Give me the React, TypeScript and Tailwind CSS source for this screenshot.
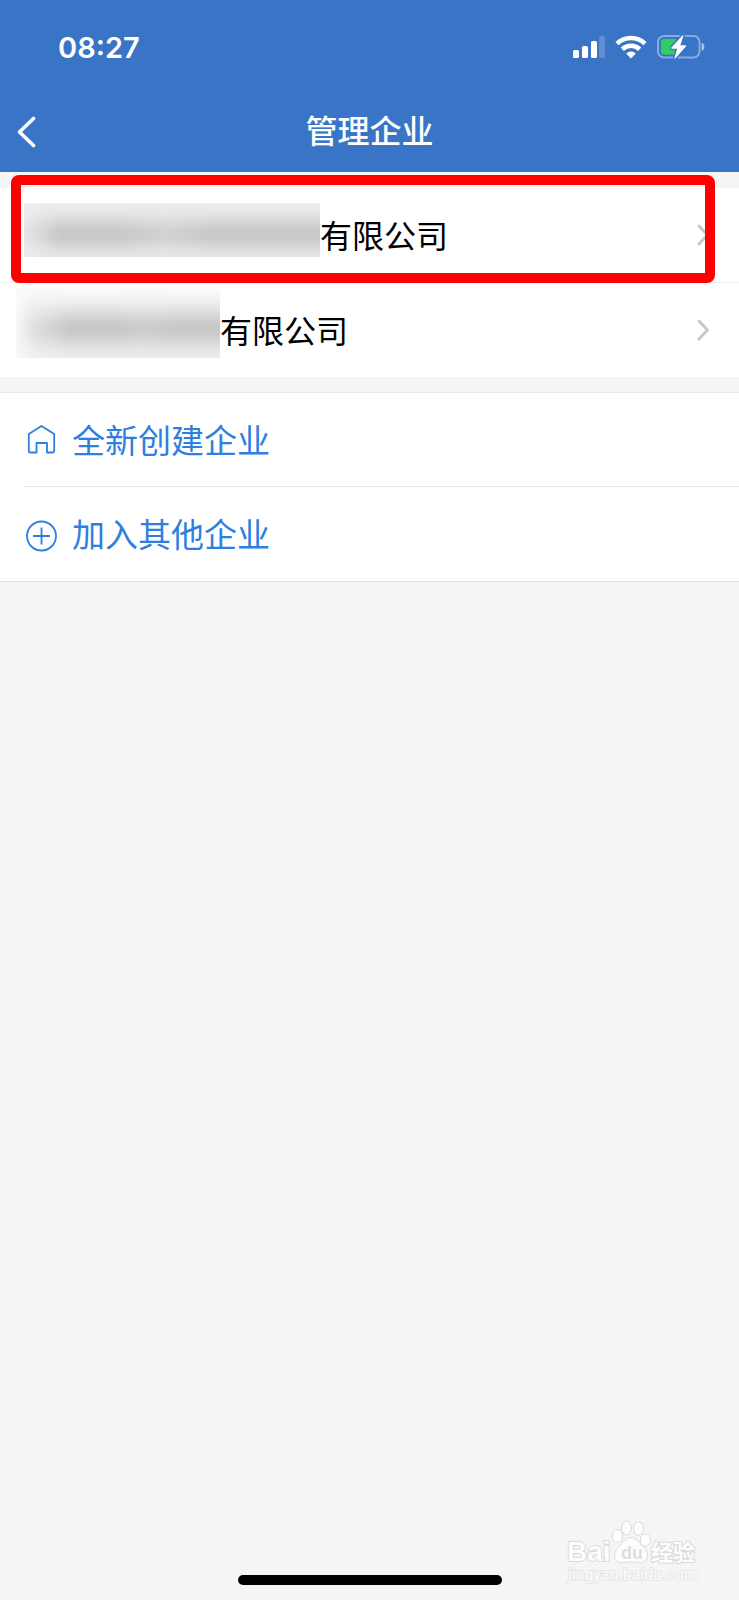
import type { ReactNode } from "react";

interface Company {
  id: string;
  suffix: string;
  maskClass: string;
  rowClass: string;
}

const companies: Company[] = [
  {
    id: "first",
    suffix: "有限公司",
    rowClass: "pl-6",
    maskClass:
      "w-[296px] h-[54px] -mt-2.5 bg-[linear-gradient(to_right,#eeeeeecc,#eeeeee00_12%,#eeeeee00_32%,#eeeeee40_48%,#eeeeee00_64%),linear-gradient(to_bottom,#eeeff0,#e2e2e2_22%,#c9c9c9_50%,#c9c9c9_65%,#e0e0e0_90%,#e4e4e4)]",
  },
  {
    id: "second",
    suffix: "有限公司",
    rowClass: "pl-4",
    maskClass:
      "w-[204px] h-[70px] -mt-3.5 bg-[linear-gradient(to_right,#fafafaf0,#f6f6f680_9%,#f0f0f000_26%,#f0f0f000_50%,#f0f0f020_62%,#f0f0f000_78%),linear-gradient(to_bottom,#fcfcfc,#efefef_20%,#c9c9c9_52%,#c9c9c9_64%,#e6e6e6_90%,#ebebeb)]",
  },
];

const ChevronRight = () => (
  <svg className="ml-auto h-[22px] w-3.5 shrink-0" viewBox="0 0 14 22" fill="none" aria-hidden="true">
    <path d="M2 2 10.5 11 2 20" stroke="#c8c8c8" strokeWidth="3" strokeLinecap="round" strokeLinejoin="round" />
  </svg>
);

const StatusBar = () => (
  <div className="flex h-[94px] items-center justify-between pr-[34px] pl-[58px]">
    <time className="pt-0.5 font-['Inter',sans-serif] text-[29px] leading-9 font-semibold">08:27</time>
    <div className="flex items-center gap-2.5">
      <svg className="h-6 w-8" viewBox="0 0 32 24" fill="#fff" aria-hidden="true">
        <rect x="0" y="15" width="6" height="8" rx="1.6" />
        <rect x="9" y="11" width="6" height="12" rx="1.6" />
        <rect x="18" y="6" width="6" height="17" rx="1.6" />
        <rect x="26" y="1" width="6" height="22" rx="1.6" opacity=".2" />
      </svg>
      <svg className="h-6 w-8" viewBox="0 0 32 24" aria-hidden="true">
        <g fill="none" stroke="#fff" strokeWidth="4.6">
          <path d="M2 8.6a20.5 20.5 0 0 1 28 0" />
          <path d="M7.3 14.2a12.8 12.8 0 0 1 17.4 0" />
        </g>
        <path d="M11.2 18.4a7 7 0 0 1 9.6 0L16 23.4Z" fill="#fff" />
      </svg>
      <svg className="h-6 w-12" viewBox="0 0 48 24" aria-hidden="true">
        <rect x="1" y="1" width="41.5" height="21.5" rx="6" fill="none" stroke="#fff" strokeOpacity=".4" strokeWidth="2" />
        <path d="M45 8.2c2.6.9 2.6 6.3 0 7.2Z" fill="#fff" fillOpacity=".5" stroke="#fff" strokeOpacity=".4" />
        <path d="M7.5 4H19v15.5H7.5A3.5 3.5 0 0 1 4 16V7.5A3.5 3.5 0 0 1 7.5 4Z" fill="#30d158" />
        <path
          d="M25.4.6 14.4 12.4c-.6.7-.3 1.3.5 1.3h5.3l-2.7 9c-.3 1 .4 1.3 1 .6l10.4-11.8c.6-.7.3-1.3-.5-1.3h-5.1l3-9c.3-1-.3-1.3-.9-.6Z"
          fill="#fff"
          stroke="#3a74c6"
          strokeWidth="3"
          paintOrder="stroke"
        />
      </svg>
    </div>
  </div>
);

const NavBar = () => (
  <div className="grid h-[78px] grid-cols-[1fr_auto_1fr] items-center pb-1.5">
    <button type="button" aria-label="返回" className="flex w-12 items-center py-1 pl-4">
      <svg className="mt-1 h-8 w-5" viewBox="0 0 20 32" fill="none" aria-hidden="true">
        <path d="M17.5 2.5 3.5 16l14 13.5" stroke="#fff" strokeWidth="3.6" strokeLinecap="round" strokeLinejoin="round" />
      </svg>
    </button>
    <h1 className="mt-1 text-[32px] leading-10 font-medium">管理企业</h1>
  </div>
);

interface ActionRowProps {
  label: string;
  icon: ReactNode;
}

const ActionRow = ({ label, icon }: ActionRowProps) => (
  <li className="group pl-6 last:border-b last:border-[#e2e2e2]">
    <button
      type="button"
      className="flex h-[94px] w-full items-center gap-3.5 border-b border-[#e8e8e8] text-left text-[33px] leading-10 text-[#2e7fe0] group-last:border-b-0"
    >
      {icon}
      <span className="pt-1">{label}</span>
    </button>
  </li>
);

const HomeIcon = () => (
  <svg className="h-8 w-[34px] shrink-0" viewBox="0 0 34 32" fill="none" aria-hidden="true">
    <path
      d="M17.5 2 30.2 10V27q0 1.5-1.5 1.5H23V19H12.5v9.5H6.3q-1.5 0-1.5-1.5V10Z"
      stroke="currentColor"
      strokeWidth="1.8"
      strokeLinejoin="round"
    />
  </svg>
);

const PlusIcon = () => (
  <svg className="mt-1 h-8 w-[34px] shrink-0" viewBox="0 0 34 32" fill="none" stroke="currentColor" strokeWidth="1.8" aria-hidden="true">
    <circle cx="17.5" cy="16" r="14.5" />
    <path d="M9 16h17M17.5 7.5v17" />
  </svg>
);

const Watermark = () => (
  <svg
    className="absolute right-9 bottom-3 h-[68px] w-[140px]"
    viewBox="0 0 140 68"
    fill="#fdfdfd"
    stroke="#dadada"
    strokeWidth="1"
    aria-label="Baidu 经验"
  >
    <g fontFamily="'Liberation Sans', sans-serif" fontWeight="700">
      <text x="4" y="41" fontSize="28" strokeWidth="2" paintOrder="stroke">Bai</text>
      <ellipse cx="54.5" cy="16" rx="5.2" ry="6.5" />
      <ellipse cx="63.5" cy="8" rx="5" ry="7" />
      <ellipse cx="75.5" cy="8.5" rx="5" ry="6.8" transform="rotate(8 75.5 8.5)" />
      <ellipse cx="82.5" cy="20" rx="5.2" ry="6.2" />
      <path d="M68 17.5c-5 0-7.5 4-10.5 7.5s-6.5 6-6 11c.5 4.5 4 7 9 6.5 5-.8 10-.8 15 0 5 .5 8.5-2 9-6.5.5-5-3-7.5-6-11s-5.5-7.5-10.5-7.5Z" />
      <text x="58" y="39" fontSize="18" fill="#dedede" stroke="none">du</text>
    </g>
    <text
      x="88"
      y="40"
      fontSize="22"
      fontWeight="700"
      fontFamily="'Noto Sans CJK SC', sans-serif"
      strokeWidth="2"
      paintOrder="stroke"
    >
      经验
    </text>
    <text
      x="5"
      y="60"
      fontSize="16"
      fontFamily="Roboto, sans-serif"
      stroke="#e2e2e2"
      strokeWidth="1.5"
      paintOrder="stroke"
    >
      jingyan.baidu.com
    </text>
  </svg>
);

export default function App() {
  return (
    <div className="relative flex min-h-screen flex-col bg-[#f5f5f5] font-['Liberation_Sans','Noto_Sans_CJK_SC',sans-serif]">
      <header className="bg-[#3a74c6] text-white">
        <StatusBar />
        <NavBar />
      </header>

      <main>
        <section className="relative pt-4">
          <ul className="bg-white">
            {companies.map(({ id, suffix, maskClass, rowClass }) => (
              <li key={id} className="border-b border-[#f0f0f0] last:border-b-0">
                <button
                  type="button"
                  className={`flex h-[94px] w-full items-center pr-7 text-left text-[32px] leading-10 text-black ${rowClass}`}
                >
                  <span className={`shrink-0 ${maskClass}`} />
                  <span className="pt-1">{suffix}</span>
                  <ChevronRight />
                </button>
              </li>
            ))}
          </ul>
          {/* highlight around the first company */}
          <div className="pointer-events-none absolute top-[3px] right-6 left-[11px] h-[108px] rounded-lg border-10 border-[#ff0000]" />
        </section>

        <ul className="mt-[15px] border-t border-[#e8e8e8] bg-white">
          <ActionRow label="全新创建企业" icon={<HomeIcon />} />
          <ActionRow label="加入其他企业" icon={<PlusIcon />} />
        </ul>
      </main>

      <Watermark />
      <div className="mx-auto mt-auto mb-[15px] h-2.5 w-[264px] rounded-full bg-black" />
    </div>
  );
}
